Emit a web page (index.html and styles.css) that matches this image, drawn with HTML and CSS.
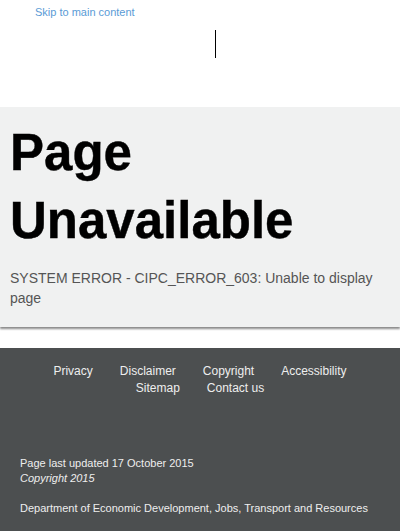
FILE: index.html
```html
<!DOCTYPE html>
<html lang="en">
<head>
<meta charset="utf-8">
<title>Page Unavailable</title>
<link rel="stylesheet" href="styles.css">
</head>
<body>
<header class="site-header">
  <a class="skip-link" href="#main">Skip to main content</a>
  <div class="header-divider"></div>
</header>
<main id="main" class="error-panel">
  <h1 class="error-title">Page Unavailable</h1>
  <p class="error-message">SYSTEM ERROR - CIPC_ERROR_603: Unable to display page</p>
</main>
<footer class="site-footer">
  <ul class="footer-links">
    <li><a href="#">Privacy</a></li>
    <li><a href="#">Disclaimer</a></li>
    <li><a href="#">Copyright</a></li>
    <li><a href="#">Accessibility</a></li>
    <li><a href="#">Sitemap</a></li>
    <li><a href="#">Contact us</a></li>
  </ul>
  <div class="footer-info">
    <p class="updated">Page last updated 17 October 2015</p>
    <p class="copyright">Copyright 2015</p>
    <p class="department">Department of Economic Development, Jobs, Transport and Resources</p>
  </div>
</footer>
</body>
</html>
```
FILE: styles.css
```css
html, body {
  margin: 0;
  padding: 0;
  background: #ffffff;
  font-family: "Liberation Sans", Arial, Helvetica, sans-serif;
}

.site-header {
  height: 107px;
  padding: 5px 0 0 35px;
  box-sizing: border-box;
}

.skip-link {
  display: block;
  width: max-content;
  font-size: 11px;
  line-height: 15px;
  color: #5a9bd6;
  text-decoration: none;
}

.header-divider {
  margin: 10px 0 0 180px;
  width: 0;
  height: 28px;
  border-left: 1px solid #000000;
}

.error-panel {
  display: block;
  background: #f0f1f1;
  padding: 12px 10px 19px;
  box-shadow: 0 2px 2px #8a8a8a;
}

.error-title {
  margin: 0;
  font-size: 51px;
  line-height: 68px;
  font-weight: bold;
  color: #000000;
  -webkit-text-stroke: 0.4px #000000;
}

.error-message {
  margin: 13px 0 0;
  font-size: 14px;
  line-height: 20px;
  color: #555555;
}

.site-footer {
  margin-top: 21px;
  background: #4c4f50;
  padding: 15px 20px 30px;
  color: #eeeeee;
}

.footer-links {
  list-style: none;
  margin: 0;
  padding: 0 5px;
  display: flex;
  flex-wrap: wrap;
  justify-content: center;
  column-gap: 27px;
  font-size: 12px;
  line-height: 17px;
}

.footer-links a {
  color: #eeeeee;
  text-decoration: none;
}

.footer-info {
  margin-top: 59px;
  font-size: 11px;
  line-height: 15px;
}

.footer-info p {
  margin: 0;
}

.copyright {
  font-style: italic;
}

.footer-info .department {
  margin-top: 15px;
}
```
